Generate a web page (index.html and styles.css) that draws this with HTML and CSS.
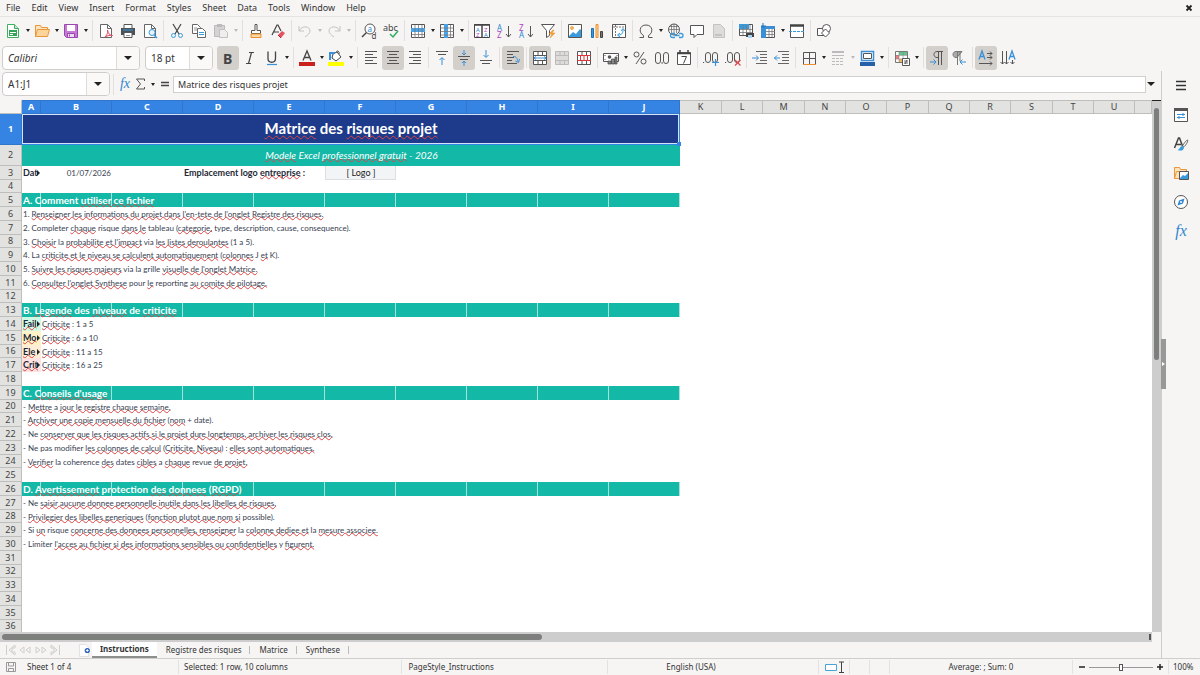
FILE: index.html
```html
<!DOCTYPE html>
<html lang="en">
<head>
<meta charset="utf-8">
<title>Matrice des risques projet</title>
<link rel="stylesheet" href="styles.css">
</head>
<body>
<div class="app">
<header class="menubar">
<nav class="menus"><button>File</button><button>Edit</button><button>View</button><button>Insert</button><button>Format</button><button>Styles</button><button>Sheet</button><button>Data</button><button>Tools</button><button>Window</button><button>Help</button></nav>
<button class="close" aria-label="Close"><svg viewBox="0 0 8 8"><path d="M1.500 1.500l5 5M6.500 1.500l-5 5" stroke="#222" stroke-width="1.800"/></svg></button>
</header>

<div class="toolbar" role="toolbar" aria-label="Standard">
<button class="tb" aria-label="New"><svg viewBox="0 0 16 16"><path d="M2.500 1.500h7l4 4v9h-11z" fill="#fff" stroke="#3fae63"/><path d="M9.500 1.500v4h4" fill="#bfe6cb" stroke="#3fae63"/><path d="M4 7h8v6H4z" fill="#33a357"/><path d="M5 9.500h6M5 11.500h3" stroke="#fff"/></svg></button><button class="dd" aria-label="New options"></button>
<button class="tb" aria-label="Open"><svg viewBox="0 0 16 16"><path d="M1.500 13.500v-11h5l1 2h6v2" fill="#fbe3bd" stroke="#e9973a"/><path d="M1.500 13.500l2-7h12l-2 7z" fill="#fdd49a" stroke="#e9973a"/></svg></button><button class="dd" aria-label="Open options"></button>
<button class="tb" aria-label="Save"><svg viewBox="0 0 16 16"><path d="M1.500 1.500h13v13h-11l-2-2z" fill="#c27bd0" stroke="#9b46b0"/><path d="M4 2h8v6H4z" fill="#fff"/><path d="M4.500 10.500h7v4h-7z" fill="#eedcf2" stroke="#9b46b0"/><path d="M6.500 11.500v2" stroke="#9b46b0"/></svg></button><button class="dd" aria-label="Save options"></button>
<i class="sep"></i>
<button class="tb" aria-label="Export PDF"><svg viewBox="0 0 16 16"><path d="M2.500 1.500h7l4 4v9h-11z" fill="#fff" stroke="#666"/><path d="M9.500 1.500v4h4" fill="none" stroke="#666"/><path d="M7 14c3-3 3-6 2.500-7 0 3 2 5 5 5.500-2-.5-5 0-7.500 1.500z" fill="none" stroke="#e0475a"/></svg></button>
<button class="tb" aria-label="Print"><svg viewBox="0 0 16 16"><path d="M4 1.500h8v4H4z" fill="#fff" stroke="#555"/><path d="M1 5h14v7H1z" fill="#4a5157"/><path d="M3 7h10" stroke="#3a9bdc"/><path d="M4 9.500h8v5H4z" fill="#fff" stroke="#555"/><path d="M6 12.500h4" stroke="#999"/></svg></button>
<button class="tb" aria-label="Print preview"><svg viewBox="0 0 16 16"><path d="M2.500 1.500h7l4 4v9h-11z" fill="#fff" stroke="#666"/><path d="M9.500 1.500v4h4" fill="none" stroke="#666"/><circle cx="10" cy="9.500" r="3" fill="#e4f2fb" stroke="#3a9bdc"/><path d="M12 12l3 3" stroke="#3a9bdc" stroke-width="1.500"/></svg></button>
<i class="sep"></i>
<button class="tb" aria-label="Cut"><svg viewBox="0 0 16 16"><path d="M4 1l6 10M12 1L6 11" fill="none" stroke="#444" stroke-width="1.200"/><circle cx="4.500" cy="12.500" r="2" fill="none" stroke="#3a9bdc"/><circle cx="11.500" cy="12.500" r="2" fill="none" stroke="#3a9bdc"/></svg></button>
<button class="tb" aria-label="Copy"><svg viewBox="0 0 16 16"><path d="M1.500 1.500h5l3 3v6h-8z" fill="#fff" stroke="#666"/><path d="M3 5h3M3 7h3" stroke="#999"/><path d="M6.500 5.500h5l3 3v6h-8z" fill="#fff" stroke="#666"/><path d="M8 9.500h5M8 11.500h5" stroke="#3a9bdc"/></svg></button>
<button class="tb" aria-label="Paste"><svg viewBox="0 0 16 16"><path d="M1.500 2.500h10v11h-10z" fill="#d5d4d2" stroke="#bbb"/><path d="M4 1h5v3H4z" fill="#bbb"/><path d="M6.500 6.500h5l3 3v5h-8z" fill="#eee" stroke="#c0c0c0"/></svg></button><button class="dd off" aria-label="Paste options"></button>
<i class="sep"></i>
<button class="tb" aria-label="Clone formatting"><svg viewBox="0 0 16 16"><path d="M7 1.500h2v6h3.500v3h-9v-3H7z" fill="#fff" stroke="#555"/><path d="M3 11h10v3.500H3z" fill="#fbd9a4" stroke="#ec8f2c"/></svg></button>
<button class="tb" aria-label="Clear formatting"><svg viewBox="0 0 16 16"><path d="M2 12L7 2h1l3 6M4 9h5" fill="none" stroke="#444" stroke-width="1.200"/><path d="M8 12l4-4 3 2-4 5z" fill="#e5525e"/><path d="M8 12l3 3" stroke="#b52634"/></svg></button>
<i class="sep"></i>
<button class="tb" aria-label="Undo"><svg viewBox="0 0 16 16"><path d="M2 3v5h5M2 8c3-6 11-5 11 0 0 2-2 4-5 6" fill="none" stroke="#c4c3c1"/></svg></button><button class="dd off" aria-label="Undo list"></button>
<button class="tb" aria-label="Redo"><svg viewBox="0 0 16 16"><path d="M14 3v5H9M14 8C11 2 3 3 3 8c0 2 2 4 5 6" fill="none" stroke="#c4c3c1"/></svg></button><button class="dd off" aria-label="Redo list"></button>
<i class="sep"></i>
<button class="tb" aria-label="Find and replace"><svg viewBox="0 0 16 16"><circle cx="9" cy="6" r="5" fill="#fff" stroke="#555"/><path d="M5.500 9.500L1 14" stroke="#444" stroke-width="1.500"/><text x="6.500" y="8.500" class="g blue" font-size="8">a</text><text x="10.500" y="15.500" class="g" font-size="8">d</text></svg></button>
<button class="tb" aria-label="Spelling"><svg viewBox="0 0 16 16"><text x="0" y="8" class="g" font-size="9">abc</text><path d="M7 11l3 3 5-6" fill="none" stroke="#2fae5f" stroke-width="1.500"/></svg></button>
<i class="sep"></i>
<button class="tb" aria-label="Row"><svg viewBox="0 0 16 16"><path d="M1.500 1.500h13v13h-13z" fill="#fff" stroke="#555"/><path d="M1 5h14v4H1z" fill="#4aa3e6"/><path d="M5 2v13M8.500 2v13M12 2v13M2 11.500h12" stroke="#777" stroke-width=".8"/></svg></button><button class="dd" aria-label="Row options"></button>
<button class="tb" aria-label="Column"><svg viewBox="0 0 16 16"><path d="M1.500 1.500h13v13h-13z" fill="#fff" stroke="#555"/><path d="M5 1h4v14H5z" fill="#4aa3e6"/><path d="M2 5h13M2 8.500h13M2 12h13M11.500 2v13" stroke="#777" stroke-width=".8"/></svg></button><button class="dd" aria-label="Column options"></button>
<i class="sep"></i>
<button class="tb" aria-label="Sort"><svg viewBox="0 0 16 16"><path d="M.5 1.500h15v13H.5z" fill="#fff" stroke="#444"/><path d="M0 2h16M8 2v13" stroke="#444" stroke-width="1.500"/><text x="2" y="8.500" class="g blue" font-size="6">A</text><text x="2" y="14" class="g pur" font-size="6">Z</text><text x="10" y="8.500" class="g pur" font-size="6">Z</text><text x="10" y="14" class="g blue" font-size="6">A</text></svg></button>
<button class="tb" aria-label="Sort ascending"><svg viewBox="0 0 16 16"><text x="1" y="7.500" class="g blue" font-size="8">A</text><text x="1" y="15" class="g pur" font-size="8">Z</text><path d="M12.500 3v11M10 11l2.500 3 2.500-3" fill="none" stroke="#555"/></svg></button>
<button class="tb" aria-label="Sort descending"><svg viewBox="0 0 16 16"><text x="1" y="7.500" class="g pur" font-size="8">Z</text><text x="1" y="15" class="g blue" font-size="8">A</text><path d="M12.500 3v11M10 11l2.500 3 2.500-3" fill="none" stroke="#555"/></svg></button>
<button class="tb" aria-label="AutoFilter"><svg viewBox="0 0 16 16"><path d="M1.500 1.500h13l-5 6v5l-3 2v-7z" fill="#fff" stroke="#555"/><path d="M13 7l-4 4h3l-2 4 5-5h-3l2-3z" fill="#f5a43c" stroke="#e58a1c" stroke-width=".5"/></svg></button>
<i class="sep"></i>
<button class="tb" aria-label="Image"><svg viewBox="0 0 16 16"><path d="M1.500 1.500h13v13h-13z" fill="#fff" stroke="#555"/><circle cx="5" cy="5" r="1.500" fill="#f4b860" stroke="#e58a1c" stroke-width=".6"/><path d="M2 13l4-4 3 2 4-5 1 1v7H2z" fill="#3a9bdc"/></svg></button>
<button class="tb" aria-label="Chart"><svg viewBox="0 0 16 16"><path d="M2.500 5.500h2v9h-2z" fill="#3a9bdc" stroke="#1d72b4"/><path d="M7 1.500h2v13H7z" fill="#fbd9a4" stroke="#ec8f2c"/><path d="M11.500 8.500h2v6h-2z" fill="#777" stroke="#444"/></svg></button>
<button class="tb" aria-label="Pivot table"><svg viewBox="0 0 16 16"><path d="M1.500 1.500h13v13h-13z" fill="#fff" stroke="#555"/><path d="M2 4h12M4.500 2v12" stroke="#777" stroke-dasharray="2 1"/><path d="M7 12c5 0 5-3 5-6M10 8l2-2.500L14 8M9 10l-2.500 2L9 14" fill="none" stroke="#3a9bdc"/></svg></button>
<i class="sep"></i>
<button class="tb" aria-label="Special character"><svg viewBox="0 0 16 16"><path d="M1.500 14.500h4v-2C.5 10 1 2 8 2s7.500 8 2.500 10.500v2h4" fill="none" stroke="#555"/></svg></button><button class="dd" aria-label="Special characters list"></button>
<button class="tb" aria-label="Hyperlink"><svg viewBox="0 0 16 16"><circle cx="7" cy="6.500" r="5.500" fill="none" stroke="#555"/><path d="M1.500 6.500h11M7 1v11M3 3.500h8M4.500 2v8M9.500 2v8" fill="none" stroke="#666" stroke-width=".7"/><path d="M8 10.500H5.500a2 2 0 000 4H8M12 10.500h2a2 2 0 010 4h-2M7.500 12.500h5" fill="none" stroke="#3a9bdc" stroke-width="1.300"/></svg></button>
<button class="tb" aria-label="Comment"><svg viewBox="0 0 16 16"><path d="M1.500 2.500h13v9H8l-3 3v-3H1.500z" fill="#fff" stroke="#555"/></svg></button>
<button class="tb" aria-label="Headers and footers"><svg viewBox="0 0 16 16"><path d="M2.500 1.500h7l4 4v9h-11z" fill="#dddcda" stroke="#c4c3c1"/><path d="M4 11h7v2H4z" fill="#c4c3c1"/></svg></button>
<i class="sep"></i>
<button class="tb" aria-label="Print area"><svg viewBox="0 0 16 16"><path d="M1.500 1.500h13v11h-13z" fill="#fff" stroke="#555"/><path d="M1 1h10v5H1z" fill="#3a9bdc"/><path d="M2 6.500h12M2 9.500h12M5 2v10M8.500 2v10M12 2v10" stroke="#777" stroke-width=".8"/><path d="M8 10h8v4H8z" fill="#444"/><path d="M10 12h4v3h-4z" fill="#a9d4f3"/></svg></button>
<button class="tb" aria-label="Freeze"><svg viewBox="0 0 16 16"><path d="M2.500 3.500h12v11h-12z" fill="#fff" stroke="#555"/><path d="M1 3h5v12H1zM6 3h9v3H6z" fill="#3a8fd6"/><path d="M6 8.500h9M6 11.500h9M9 6v8M12 6v8" stroke="#777" stroke-width=".8"/><path d="M3 0v5M1 3h5" stroke="#1d72b4"/></svg></button><button class="dd" aria-label="Freeze options"></button>
<button class="tb" aria-label="Split"><svg viewBox="0 0 16 16"><path d="M1.500 2v12.500h13V2" fill="#fff" stroke="#555"/><path d="M1 2.500h14" stroke="#444" stroke-width="2.500"/><path d="M0 8.500h16" stroke="#3a9bdc" stroke-dasharray="3 1"/></svg></button>
<i class="sep"></i>
<button class="tb" aria-label="Draw functions"><svg viewBox="0 0 16 16"><path d="M1.500 5.500h7v7h-7z" fill="#fff" stroke="#555"/><circle cx="10.500" cy="5.500" r="4" fill="#fff" stroke="#555"/><path d="M9.500 6l4 4-4 4-4-4z" fill="#fff" stroke="#555"/></svg></button>
</div>

<div class="toolbar format" role="toolbar" aria-label="Formatting">
<div class="combo font"><input value="Calibri" aria-label="Font name"><button aria-label="Font list"></button></div>
<div class="combo size"><input value="18 pt" aria-label="Font size"><button aria-label="Size list"></button></div>
<button class="tb on" aria-label="Bold"><svg viewBox="0 0 16 16"><text x="3" y="13.500" class="g" font-size="14" font-weight="700">B</text></svg></button>
<button class="tb" aria-label="Italic"><svg viewBox="0 0 16 16"><path d="M7 2.500h5M4 13.500h5M9.500 2.500l-3 11" stroke="#444" stroke-width="1.200"/></svg></button>
<button class="tb" aria-label="Underline"><svg viewBox="0 0 16 16"><path d="M4 1.500v7c0 5 7.500 5 7.500 0v-7" fill="none" stroke="#444" stroke-width="1.300"/><path d="M3 14.500h10" stroke="#3a8fd6" stroke-width="1.200"/></svg></button><button class="dd" aria-label="Underline options"></button>
<i class="sep"></i>
<button class="tb" aria-label="Font color"><svg viewBox="0 0 16 16"><path d="M4 10.500L8 1l4 9.500M5.500 7.500h5" fill="none" stroke="#444" stroke-width="1.300"/><path d="M0 12h16v4H0z" fill="#c9211e"/></svg></button><button class="dd" aria-label="Font colors"></button>
<button class="tb" aria-label="Highlighting"><svg viewBox="0 0 16 16"><path d="M5 4l4-2 4 5-5 4-4-3zM9 2c-1-2 3-1 2 2" fill="#fff" stroke="#444"/><path d="M2 10V3h5" fill="none" stroke="#3a8fd6" stroke-width="2"/><path d="M0 12h16v4H0z" fill="#ff0"/></svg></button><button class="dd" aria-label="Highlight colors"></button>
<i class="sep"></i>
<button class="tb" aria-label="Align left"><svg viewBox="0 0 16 16"><path d="M2 1.500h12M2 4.500h8M2 7.500h12M2 10.500h8M2 13.500h12" stroke="#555"/></svg></button>
<button class="tb on" aria-label="Center"><svg viewBox="0 0 16 16"><path d="M2 1.500h12M4 4.500h8M2 7.500h12M4 10.500h8M2 13.500h12" stroke="#555"/></svg></button>
<button class="tb" aria-label="Align right"><svg viewBox="0 0 16 16"><path d="M2 1.500h12M6 4.500h8M2 7.500h12M6 10.500h8M2 13.500h12" stroke="#555"/></svg></button>
<i class="sep"></i>
<button class="tb" aria-label="Align top"><svg viewBox="0 0 16 16"><path d="M2 1.500h12M4 4.500h8" stroke="#555"/><path d="M8 15V8M5.500 10L8 7.500l2.500 2.500" fill="none" stroke="#3a8fd6"/></svg></button>
<button class="tb on" aria-label="Center vertically"><svg viewBox="0 0 16 16"><path d="M2 6.500h12M4 9.500h8" stroke="#555"/><path d="M8 0v5M6 3l2 2 2-2M8 16v-5M6 13l2-2 2 2" fill="none" stroke="#3a8fd6"/></svg></button>
<button class="tb" aria-label="Align bottom"><svg viewBox="0 0 16 16"><path d="M2 10.500h12M4 13.500h8" stroke="#555"/><path d="M8 0v7M5.500 5L8 7.500 10.500 5" fill="none" stroke="#3a8fd6"/></svg></button>
<i class="sep"></i>
<button class="tb on" aria-label="Wrap text"><svg viewBox="0 0 16 16"><path d="M2 1.500h12M2 4.500h6M2 7.500h7M2 10.500h5M2 13.500h10" stroke="#555"/><path d="M8 6.500c4 0 4 2 5 5M10.500 11l3 1.500 1-3.500" fill="none" stroke="#3a8fd6"/></svg></button>
<i class="sep"></i>
<button class="tb on" aria-label="Merge and center"><svg viewBox="0 0 16 16"><path d="M1.500 1.500h13v13h-13z" fill="#fff" stroke="#555"/><path d="M1 5.500h14M1 10.500h14M6 2v3M10.500 2v3M6 11v3M10.500 11v3" stroke="#555"/><path d="M2 8h12M4 6.500L2 8l2 1.500M12 6.500L14 8l-2 1.500" fill="none" stroke="#3a8fd6"/></svg></button>
<button class="tb" aria-label="Merge cells"><svg viewBox="0 0 16 16"><path d="M1.500 1.500h13v13h-13z" fill="#dddcda" stroke="#bbb"/><path d="M1 5.500h14M1 10.500h14M6 2v3M10.500 2v3M6 11v3M10.500 11v3" stroke="#bbb"/></svg></button>
<button class="tb" aria-label="Unmerge cells"><svg viewBox="0 0 16 16"><path d="M1.500 1.500h13v13h-13z" fill="#fff" stroke="#555"/><path d="M6 2v3M10.500 2v3M6 11v3M10.500 11v3" stroke="#555"/><path d="M1 5.500h14M1 10.500h14M4.500 5v5M8 5v5M11.500 5v5" stroke="#d9363e"/></svg></button>
<i class="sep"></i>
<button class="tb" aria-label="Currency"><svg viewBox="0 0 16 16"><path d="M.5 3.500h15v8H.5z" fill="#fff" stroke="#555"/><circle cx="6.500" cy="7" r="1.800" fill="#555"/><path d="M2 5v1M2 9v1M14 5v1" stroke="#555"/><path d="M5 11h3v3H5zM8.500 9h3v5h-3zM12 7h2v7h-2z" fill="#888" stroke="#444" stroke-width=".7"/></svg></button><button class="dd" aria-label="Currencies"></button>
<button class="tb" aria-label="Percent"><svg viewBox="0 0 16 16"><circle cx="4.500" cy="4.500" r="2.500" fill="none" stroke="#555"/><circle cx="11.500" cy="11.500" r="2.500" fill="none" stroke="#555"/><path d="M12 2L4 14" stroke="#555"/></svg></button>
<button class="tb" aria-label="Number"><svg viewBox="0 0 16 16"><rect x="1.500" y="2.500" width="5" height="11" rx="2.500" fill="none" stroke="#555"/><rect x="9.500" y="2.500" width="5" height="11" rx="2.500" fill="none" stroke="#555"/><path d="M7.500 13h1.200" stroke="#555" stroke-width="1.500"/></svg></button>
<button class="tb" aria-label="Date"><svg viewBox="0 0 16 16"><path d="M1.500 2.500h13v12h-13z" fill="#fff" stroke="#555"/><path d="M1 3.500h14M4 0v3M12 0v3" stroke="#444" stroke-width="1.500"/><path d="M5.500 6.500h5l-3 7" fill="none" stroke="#444"/></svg></button>
<i class="sep"></i>
<button class="tb" aria-label="Add decimal"><svg viewBox="0 0 16 16"><rect x="2.500" y="2.500" width="5" height="10" rx="2.500" fill="none" stroke="#555"/><rect x="9.500" y="2.500" width="5" height="10" rx="2.500" fill="none" stroke="#555"/><path d="M0 12.500h1.200" stroke="#555"/><path d="M12.500 9v7M9 12.500h7" stroke="#3a8fd6" stroke-width="1.200"/></svg></button>
<button class="tb" aria-label="Delete decimal"><svg viewBox="0 0 16 16"><rect x="2.500" y="2.500" width="5" height="10" rx="2.500" fill="none" stroke="#555"/><rect x="9.500" y="2.500" width="5" height="10" rx="2.500" fill="none" stroke="#555"/><path d="M0 12.500h1.200" stroke="#555"/><path d="M10 10l5.500 5.500M15.500 10L10 15.500" stroke="#e0474e" stroke-width="1.200"/></svg></button>
<i class="sep"></i>
<button class="tb" aria-label="Increase indent"><svg viewBox="0 0 16 16"><path d="M4 1.500h11M8 4.500h7M8 7.500h7M8 10.500h7M4 13.500h11" stroke="#666"/><path d="M0 8h6M4 5.500L6.500 8 4 10.500" fill="none" stroke="#3a8fd6"/></svg></button>
<button class="tb" aria-label="Decrease indent"><svg viewBox="0 0 16 16"><path d="M4 1.500h11M8 4.500h7M8 7.500h7M8 10.500h7M4 13.500h11" stroke="#666"/><path d="M0 8h6M3 5.500L.5 8 3 10.500" fill="none" stroke="#3a8fd6"/></svg></button>
<i class="sep"></i>
<button class="tb" aria-label="Borders"><svg viewBox="0 0 16 16"><path d="M2.500 14.500v-12h12v12M8.500 3v11M3 8.500h11" fill="none" stroke="#555"/><path d="M2 14.500h13" stroke="#ec8f2c"/></svg></button><button class="dd" aria-label="Border options"></button>
<button class="tb" aria-label="Border style"><svg viewBox="0 0 16 16"><path d="M2 2h12" stroke="#bbb" stroke-width="2"/><path d="M2 5.500h12" stroke="#bbb"/><path d="M2 8.500h12M2 11.500h12M2 14.500h12" stroke="#bbb" stroke-dasharray="3 1"/></svg></button><button class="dd off" aria-label="Border styles"></button>
<button class="tb" aria-label="Border color"><svg viewBox="0 0 16 16"><path d="M2.500 1.500h12v9h-12z" fill="#fff" stroke="#3a8fd6" stroke-width="1.500"/><path d="M4.500 3.500h8v5h-8z" fill="none" stroke="#555"/><path d="M1 12h15v4H1z" fill="#2560a8"/></svg></button><button class="dd" aria-label="Border colors"></button>
<i class="sep"></i>
<button class="tb" aria-label="Conditional formatting"><svg viewBox="0 0 16 16"><path d="M1.500 1.500h12v11h-12z" fill="#fff" stroke="#777"/><path d="M5 2h8v3H5z" fill="#62c48a"/><path d="M2 5h3v4H2z" fill="#ee7b80"/><path d="M5 9h4v3H5z" fill="#f5b45c"/><path d="M2 5.500h11M2 9h11M5 2v10M9 2v10" stroke="#888" stroke-width=".6"/><path d="M8.500 8.500h7v7h-7z" fill="#fff" stroke="#555"/><path d="M10 11h4M10 13h4M13 10l-2 4" stroke="#444" stroke-width=".8"/></svg></button><button class="dd" aria-label="Conditional options"></button>
<i class="sep"></i>
<button class="tb on" aria-label="Left to right"><svg viewBox="0 0 16 16"><path d="M14 1.500H8c-4 0-4 6 0 6h1M9.500 2v13M12.500 2v13" fill="none" stroke="#555"/><path d="M1 12h6M4.500 9.500L7 12l-2.500 2.500" fill="none" stroke="#3a8fd6"/></svg></button>
<button class="tb" aria-label="Right to left"><svg viewBox="0 0 16 16"><path d="M11 1.500H5c-4 0-4 6 0 6h1z" fill="#aaa" stroke="#777"/><path d="M6.500 2v13M9 2v9" fill="none" stroke="#777"/><path d="M15 12H9M11.500 9.500L9 12l2.500 2.500" fill="none" stroke="#3a8fd6"/></svg></button>
<i class="sep"></i>
<button class="tb on" aria-label="Text left to right"><svg viewBox="0 0 16 16"><path d="M1 9.500L4 1l3 8.500M2 6.500h4" fill="none" stroke="#3a8fd6" stroke-width="1.300"/><path d="M9 3.500h5M9 7.500h5M1 13.500h13M12 1.500l2 2-2 2M12 5.500l2 2-2 2M12 11.500l2 2-2 2" fill="none" stroke="#555"/></svg></button>
<button class="tb" aria-label="Text top to bottom"><svg viewBox="0 0 16 16"><path d="M9 9.500L12 1l3 8.500M10 6.500h4" fill="none" stroke="#3a8fd6" stroke-width="1.300"/><path d="M2.500 1v13M6.500 1v13M12.500 10v4M.5 12l2 2 2-2M4.500 12l2 2 2-2M10.500 12l2 2 2-2" fill="none" stroke="#555"/></svg></button>
</div>

<main class="work">
<section class="doc">
<div class="formulabar">
<div class="combo name"><input value="A1:J1" aria-label="Name box"><button aria-label="Name list"></button></div>
<i class="sep"></i>
<button class="fb fx" aria-label="Function wizard">fx</button>
<button class="fb" aria-label="Sum"><svg viewBox="0 0 12 12"><path d="M9.500 3V1h-8l4 5-4 5h8V9" fill="none" stroke="#555"/></svg></button><button class="dd" aria-label="Select function"></button>
<button class="fb eq" aria-label="Formula"><svg viewBox="0 0 12 12"><path d="M2 4.500h8M2 7.500h8" stroke="#444" stroke-width="1.500"/></svg></button>
<input class="formula" value="Matrice des risques projet" aria-label="Formula input">
<button class="expand" aria-label="Expand formula bar"></button>
</div>

<div class="view">
<div class="sheet">
<table>
<colgroup><col class="ch"><col class="ca"><col class="cw" span="9"><col class="cm"><col class="cn"><col class="cm"><col class="cn" span="2"><col class="cm"><col class="cn" span="2"><col class="cm"><col class="cn" span="2"><col></colgroup>
<thead><tr><th class="corner"></th><th class="s">A</th><th class="s">B</th><th class="s">C</th><th class="s">D</th><th class="s">E</th><th class="s">F</th><th class="s">G</th><th class="s">H</th><th class="s">I</th><th class="s">J</th><th>K</th><th>L</th><th>M</th><th>N</th><th>O</th><th>P</th><th>Q</th><th>R</th><th>S</th><th>T</th><th>U</th><th></th></tr></thead>
<tbody>
<tr class="r1"><th class="s">1</th><td colspan="10" class="title"><u>Matrice</u> des <u>risques projet</u><span class="handle"></span></td></tr>
<tr class="r2"><th>2</th><td colspan="10" class="subtitle"><u>Modele</u> Excel <u>professionnel gratuit</u> - 2026</td></tr>
<tr><th>3</th><td class="bold more">Dat</td><td class="date">01/07/2026</td><td></td><td class="bold" colspan="2">Emplacement logo <u>entreprise</u> :</td><td class="logo">[ Logo ]</td></tr>
<tr><th>4</th></tr>
<tr class="sec"><th>5</th><td>A. Comment <u>utiliser ce fichier</u></td><td></td><td></td><td></td><td></td><td></td><td></td><td></td><td></td><td></td></tr>
<tr><th>6</th><td colspan="10">1. <u>Renseigner les informations du projet dans l'en-tete de l'onglet Registre des risques.</u></td></tr>
<tr><th>7</th><td colspan="10">2. Completer <u>chaque</u> risque <u>dans le</u> tableau (<u>categorie,</u> type, description, cause, consequence).</td></tr>
<tr><th>8</th><td colspan="10">3. <u>Choisir</u> la <u>probabilite et l'impact</u> via <u>les listes deroulantes</u> (1 a 5).</td></tr>
<tr><th>9</th><td colspan="10">4. La <u>criticite et le niveau se calculent automatiquement</u> (<u>colonnes</u> J <u>et</u> K).</td></tr>
<tr><th>10</th><td colspan="10">5. <u>Suivre les risques majeurs</u> via la grille <u>visuelle de l'onglet Matrice.</u></td></tr>
<tr><th>11</th><td colspan="10">6. <u>Consulter l'onglet Synthese</u> pour <u>le</u> reporting <u>au comite de pilotage.</u></td></tr>
<tr><th>12</th></tr>
<tr class="sec"><th>13</th><td>B. <u>Legende</u> des <u>niveaux</u> de <u>criticite</u></td><td></td><td></td><td></td><td></td><td></td><td></td><td></td><td></td><td></td></tr>
<tr><th>14</th><td class="bold more low"><u>Fail</u></td><td><u>Criticite</u> : 1 a 5</td></tr>
<tr><th>15</th><td class="bold more mid"><u>Mo</u></td><td><u>Criticite</u> : 6 a 10</td></tr>
<tr><th>16</th><td class="bold more high"><u>Ele</u></td><td><u>Criticite</u> : 11 a 15</td></tr>
<tr><th>17</th><td class="bold more crit"><u>Crit</u></td><td><u>Criticite</u> : 16 a 25</td></tr>
<tr><th>18</th></tr>
<tr class="sec"><th>19</th><td>C. <u>Conseils d'usage</u></td><td></td><td></td><td></td><td></td><td></td><td></td><td></td><td></td><td></td></tr>
<tr><th>20</th><td colspan="10">- <u>Mettre</u> a <u>jour le registre chaque semaine.</u></td></tr>
<tr><th>21</th><td colspan="10">- <u>Archiver une copie mensuelle du fichier</u> (<u>nom</u> + date).</td></tr>
<tr><th>22</th><td colspan="10">- Ne <u>conserver que les risques actifs si le projet dure longtemps, archiver les risques clos.</u></td></tr>
<tr><th>23</th><td colspan="10">- Ne pas modifier <u>les colonnes de calcul</u> (<u>Criticite, Niveau</u>) : <u>elles sont automatiques.</u></td></tr>
<tr><th>24</th><td colspan="10">- <u>Verifier</u> la coherence <u>des</u> dates <u>cibles</u> a <u>chaque</u> revue <u>de projet.</u></td></tr>
<tr><th>25</th></tr>
<tr class="sec"><th>26</th><td>D. <u>Avertissement</u> protection <u>des</u> <u>donnees</u> (<u>RGPD</u>)</td><td></td><td></td><td></td><td></td><td></td><td></td><td></td><td></td><td></td></tr>
<tr><th>27</th><td colspan="10">- Ne <u>saisir aucune donnee personnelle inutile dans les libelles de risques.</u></td></tr>
<tr><th>28</th><td colspan="10">- <u>Privilegier des libelles generiques</u> (<u>fonction plutot que nom si</u> possible).</td></tr>
<tr><th>29</th><td colspan="10">- Si <u>un</u> risque <u>concerne des donnees personnelles, renseigner</u> la <u>colonne dediee et</u> la <u>mesure associee.</u></td></tr>
<tr><th>30</th><td colspan="10">- Limiter <u>l'acces au fichier si des informations sensibles ou confidentielles</u> y <u>figurent.</u></td></tr>
<tr><th>31</th></tr><tr><th>32</th></tr><tr><th>33</th></tr><tr><th>34</th></tr><tr><th>35</th></tr><tr><th>36</th></tr>
</tbody>
</table>
</div>
<div class="vscroll"><div class="vthumb"></div></div>
<div class="hscroll"><div class="hthumb"></div><i class="grip"></i></div>
</div>

<div class="tabs">
<div class="tabnav">
<button aria-label="First sheet"><svg viewBox="0 0 12 12"><path d="M1.500 1v10M10 1L4 6l6 5V8H7V4h3z" class="nv"/></svg></button>
<button aria-label="Previous sheet"><svg viewBox="0 0 16 12"><path d="M7 3L3 6l4 3zM13 3L9 6l4 3z" class="nv"/></svg></button>
<button aria-label="Next sheet"><svg viewBox="0 0 16 12"><path d="M3 3l4 3-4 3zM9 3l4 3-4 3z" class="nv"/></svg></button>
<button aria-label="Last sheet"><svg viewBox="0 0 12 12"><path d="M10.500 1v10M2 1l6 5-6 5V8h3V4H2z" class="nv"/></svg></button>
</div>
<button class="add" aria-label="Add sheet"><svg viewBox="0 0 14 14"><path d="M1.500.5h7l3 3v10h-10z" fill="#fff" stroke="#ddd"/><circle cx="10" cy="7" r="2.800" fill="#2a62b8"/><path d="M10 5.500v3M8.500 7h3" stroke="#fff"/></svg></button>
<button class="tab active">Instructions</button><button class="tab">Registre des risques</button><button class="tab">Matrice</button><button class="tab">Synthese</button>
</div>
</section>

<aside class="side">
<span class="sidegrip"></span>
<button aria-label="Sidebar settings"><svg viewBox="0 0 16 16"><path d="M3 4.500h10M3 8.500h10M3 12.500h10" stroke="#333" stroke-width="1.300"/></svg></button>
<button aria-label="Properties"><svg viewBox="0 0 16 16"><path d="M1.500 1.500h13v13h-13z" fill="#fff" stroke="#555"/><path d="M1 2.500h14" stroke="#555" stroke-width="3"/><path d="M4 7.500h8M4 10.500h8M10 6v3M6 9v3" stroke="#3a8fd6"/></svg></button>
<button aria-label="Styles"><svg viewBox="0 0 16 16"><path d="M1.500 12L5.500 2h1l3 8M3 8.500h5" fill="none" stroke="#444" stroke-width="1.500"/><path d="M14.500 4c1 1-2 6-4 7l-1-1c1-2 4-6 5-6z" fill="#fff" stroke="#555"/><path d="M9.500 10c-3 0-2 3-5 4 3 1 6 1 6.500-2.500z" fill="#3a9bdc"/></svg></button>
<button aria-label="Gallery"><svg viewBox="0 0 16 16"><path d="M1.500 13.500v-11h5l1 2h6v9z" fill="#fbe3bd" stroke="#e9973a"/><path d="M1.500 13.500l2-7h11" fill="none" stroke="#e9973a"/><path d="M6.500 6.500h9v8h-9z" fill="#fff" stroke="#555"/><path d="M7 13l3-3 2 1 3-3v6H7z" fill="#3a9bdc"/></svg></button>
<button aria-label="Navigator"><svg viewBox="0 0 16 16"><circle cx="8" cy="8" r="6.500" fill="#fff" stroke="#555"/><path d="M11.500 4.500L10 9.500 4.500 11.500 6 6.500z" fill="#2f86d1"/><circle cx="8" cy="8" r="1" fill="#fff"/></svg></button>
<button class="fx" aria-label="Functions">fx</button>
</aside>
</main>

<footer class="status">
<span class="st doc-state"><svg viewBox="0 0 12 12"><path d="M1.500 1.500h9v9h-9zM3.500 2v3h5V2M3.500 10V7.500h5V10" fill="none" stroke="#999"/></svg></span>
<span class="st s1">Sheet 1 of 4</span>
<span class="st s2">Selected: 1 row, 10 columns</span>
<span class="st s3">PageStyle_Instructions</span>
<span class="st s4">English (USA)</span>
<span class="st s5"><svg viewBox="0 0 20 12"><path d="M1.500 3.500h11v6h-11z" fill="#fff" stroke="#4aa3d6"/><path d="M15 1h5M15 11.500h5M17.500 1v10" stroke="#444"/></svg></span>
<span class="st s6"></span><span class="st s6"></span>
<span class="st s7">Average: ; Sum: 0</span>
<span class="st zoom"><button aria-label="Zoom out"><svg viewBox="0 0 8 8"><path d="M1 4h6" stroke="#222" stroke-width="1.500"/></svg></button><input type="range" min="0" max="100" value="50" aria-label="Zoom"><button aria-label="Zoom in"><svg viewBox="0 0 8 8"><path d="M1 4h6M4 1v6" stroke="#222" stroke-width="1.500"/></svg></button></span>
<span class="st s8">100%</span>
</footer>
</div>
</body>
</html>
```
FILE: styles.css
```css
* { box-sizing: border-box; }
body { margin: 0; background: #f6f5f4; color: #333; font: 9px/12px "Noto Sans", sans-serif; }
button, input { font: inherit; color: inherit; border: 0; background: none; padding: 0; margin: 0; min-width: 0; outline: 0; }
svg { display: block; overflow: visible; }
.app { display: flex; flex-direction: column; height: 100vh; overflow: hidden; }

.menubar { display: flex; justify-content: space-between; align-items: center; height: 17px; padding: 0 7px 0 6px; flex: none; border-bottom: 1px solid #e6e4e2; }
.menus { display: flex; gap: 11px; }
.close svg { width: 8px; height: 8px; }

.toolbar { display: flex; align-items: center; height: 27px; padding-left: 2px; flex: none; }
.tb { display: grid; place-items: center; width: 22px; height: 24px; border-radius: 3px; flex: none; }
.tb svg { width: 16px; height: 16px; }
.tb.on { background: #d3d0cc; }
.dd { width: 7px; height: 20px; display: grid; place-items: center; flex: none; }
.dd::before, .combo button::before, .expand::before { content: ""; border: 2px solid transparent; border-top: 3px solid #222; border-bottom: 0; }
.dd.off::before { border-top-color: #bbb; }
.sep { width: 1px; height: 21px; margin: 0 2px; background: #e2e0de; flex: none; }
.dd + .sep { margin-left: 3px; }
.g { font-family: "Noto Sans", sans-serif; fill: #444; }
.blue { fill: #2f86d1; }
.pur { fill: #b044c0; }

.combo { display: flex; height: 24px; border: 1px solid #cfccc9; border-radius: 4px; background: #fff; overflow: hidden; flex: none; }
.combo input { flex: 1; padding-left: 5px; font-size: 10px; }
.combo button { width: 23px; border-left: 1px solid #dedbd8; background: #faf9f8; display: grid; place-items: center; }
.combo button::before { border-width: 4px 4px 0; }
.font { width: 138px; margin-right: 5px; }
.font input { font-style: italic; }
.size { width: 68px; margin-right: 4px; }

.work { display: flex; flex: 1; min-height: 0; }
.doc { display: flex; flex-direction: column; flex: 1; min-width: 0; border-right: 1px solid #cfcdcb; }
.formulabar { display: flex; align-items: center; height: 29px; padding: 1px 5px 4px 2px; flex: none; }
.name { width: 108px; }
.formulabar .sep { margin: 0 3px; }
.fb { width: 16px; height: 16px; display: grid; place-items: center; flex: none; }
.fb svg { width: 12px; height: 12px; }
.fx { font: italic 14px/16px "Liberation Serif", serif; color: #2f86d1; }
.eq { width: 17px; }
.formula { flex: 1; height: 17px; border: 1px solid #d2d0ce; background: #fff; padding-left: 4px; }
.expand { width: 10px; display: grid; place-items: center; }
.expand::before { border-width: 4px 4px 0; }

.view { display: grid; grid-template: 1fr 10px / 1fr 9px; flex: 1; min-height: 0; }
.sheet { background: #fff; overflow: hidden; min-width: 0; }
.vscroll { background: #cdcdcd; padding: 7px 2px 0; border-top: 1px solid #222; }
.vthumb { height: 48%; border-radius: 3px; background: #7d7f7d; }
.hscroll { background: #cdcdcd; padding: 2px 1px 2px 2px; display: flex; justify-content: space-between; }
.hthumb { width: 47%; border-radius: 3px; background: #7d7f7d; }
.grip { width: 2px; background: #555; }

table { border-collapse: separate; border-spacing: 0; table-layout: fixed; width: 100%; }
.ch { width: 22px; } .ca { width: 19px; } .cw { width: 71px; } .cn { width: 41px; } .cm { width: 42px; }
th { padding: 0; font-weight: 400; background: #e2e2e0; color: #444; border-right: 1px solid #bebebc; border-bottom: 1px solid #bebebc; }
thead th { height: 14px; line-height: 12px; border-top: 1px solid #bebebc; }
th.s { background: #3584e4; border-color: #2f76cc; color: #fff; font-weight: 700; }
th.corner { background: #f6f5f4; border-top-color: #f6f5f4; }
tbody tr { height: 14px; }
tbody tr:nth-child(4n) { height: 13px; }
tbody th { line-height: 12px; }
tbody .r1 { height: 31px; }
tbody .r2 { height: 21px; }
td { padding: 0 0 0 1px; font: 8px/12px Lato, sans-serif; color: #374151; white-space: nowrap; }
u { text-decoration: underline wavy #dc4444 1px; text-underline-offset: -1px; text-decoration-skip-ink: none; }
.title { position: relative; background: #1e3a8a; color: #fff; font-size: 15px; line-height: 18px; font-weight: 700; text-align: center; padding-bottom: 2px; border: solid #3584e4; border-width: 0 1px 1px 0; box-shadow: inset 0 0 0 1px #d5e4f8; }
.title u { text-underline-offset: 1px; }
.handle { position: absolute; right: -2px; bottom: -2px; width: 4px; height: 4px; background: #3584e4; }
.subtitle { background: #14b8a6; color: #fff; font-size: 10px; font-style: italic; text-align: center; padding-bottom: 2px; }
.bold { font-size: 9px; font-weight: 700; color: #1f2937; }
.more { position: relative; }
.more::after { content: ""; position: absolute; right: 1px; top: 4px; border: 3px solid transparent; border-left-color: #222; border-right: 0; }
.date { text-align: right; padding-right: 1px; }
.logo { text-align: center; font-size: 9px; background: #f3f4f6; border: 1px solid #dcdfe4; border-top: 0; color: #222; }
.sec td { background: #14b8a6; color: #fff; font-size: 10px; font-weight: 700; border-right: 1px solid #a5e2da; }
.low { background: #d1fae5; } .mid { background: #fef3c7; } .high { background: #ffedd5; } .crit { background: #fee2e2; }

.tabs { display: flex; height: 16px; flex: none; align-items: stretch; padding-left: 5px; font-size: 8px; }
.tabnav { display: flex; align-items: center; width: 72px; }
.tabnav svg { height: 12px; }
.nv { fill: none; stroke: #cfcecc; }
.add { width: 15px; display: grid; place-items: center; }
.add svg { width: 13px; height: 13px; }
.tab { padding: 0 9px; position: relative; }
.tab.active { background: #fff; font-weight: 700; border-bottom: 2px solid #8d8f8d; padding: 0 8px; }
.tab:not(.active)::after { content: ""; position: absolute; right: 0; top: 4px; height: 8px; width: 1px; background: #bbb; }

.side { position: relative; width: 38px; display: flex; flex-direction: column; align-items: center; padding-top: 4px; gap: 9px; flex: none; }
.side button { width: 20px; height: 20px; display: grid; place-items: center; }
.side button:nth-of-type(2) { margin-top: 1px; }
.side svg { width: 16px; height: 16px; }
.side .fx { font-size: 16px; line-height: 20px; }
.sidegrip { position: absolute; left: -1px; top: 268px; width: 5px; height: 50px; background: #979997; }
.sidegrip::after { content: ""; position: absolute; left: 1px; top: 23px; border: 2px solid transparent; border-left: 3px solid #fff; border-right: 0; }

.status { display: flex; align-items: center; height: 17px; border-top: 1px solid #d0cecc; flex: none; font-size: 8px; }
.st { height: 14px; line-height: 14px; border-left: 1px solid #e4e2e0; white-space: nowrap; }
.st svg { height: 12px; }
.doc-state { width: 22px; padding: 1px 0 0 5px; border: 0; }
.s1 { width: 156px; padding-left: 5px; border: 0; }
.s2 { flex: 222; padding-left: 5px; }
.s3 { flex: 203; padding-left: 6px; }
.s4 { flex: 169; text-align: center; }
.s5 { width: 31px; display: grid; place-items: center; margin-left: 44px; }
.s6 { width: 20px; }
.s7 { flex: 186; text-align: center; }
.zoom { display: flex; align-items: center; gap: 3px; width: 96px; padding: 0 4px 0 5px; }
.zoom svg { width: 8px; height: 8px; }
.zoom input { -webkit-appearance: none; appearance: none; flex: 1; height: 10px; background: linear-gradient(#999, #999) center / 100% 1px no-repeat; }
.zoom input::-webkit-slider-thumb { -webkit-appearance: none; width: 4px; height: 7px; border: 1px solid #555; background: #fff; }
.s8 { width: 32px; padding-left: 4px; }
```
